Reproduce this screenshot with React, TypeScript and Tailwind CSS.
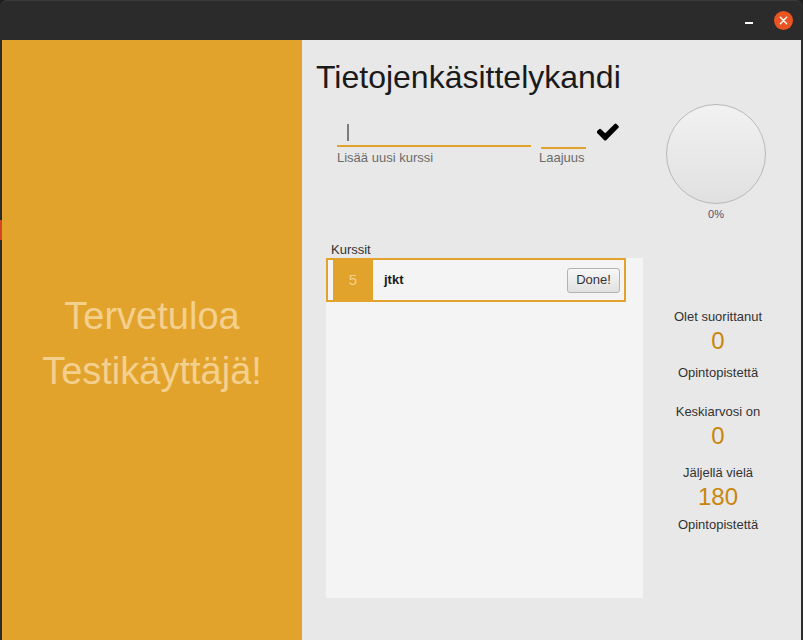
import React from 'react';

const font = { fontFamily: '"Liberation Sans", Arial, sans-serif' };

const TitleBar: React.FC = () => (
  <div className="h-[40px] bg-[#2b2b2b] rounded-t-[7px] border-t border-[#3a3a3a] flex items-center justify-end pr-[10px]">
    {/* Minimize */}
    <div className="w-[8px] h-[2px] bg-white mr-[21px] mt-[4px]" />
    {/* Close */}
    <div className="w-[19px] h-[19px] rounded-full bg-[#e95420] flex items-center justify-center">
      <svg viewBox="0 0 10 10" className="w-[9px] h-[9px]">
        <path d="M1.5 1.5 L8.5 8.5 M8.5 1.5 L1.5 8.5" stroke="white" strokeWidth="1.6" strokeLinecap="round" />
      </svg>
    </div>
  </div>
);

const Stat: React.FC<{ label: string; className?: string }> = ({ label, className }) => (
  <div className={`text-[13px] leading-[16px] text-[#333] ${className ?? ''}`}>{label}</div>
);

const Num: React.FC<{ value: string; className?: string }> = ({ value, className }) => (
  <div className={`text-[24px] leading-[28px] text-[#c9860b] ${className ?? ''}`}>{value}</div>
);

export default function App() {
  return (
    <div className="w-[803px] h-[640px] bg-[#1f1f1f] flex flex-col overflow-hidden" style={font}>
      <TitleBar />
      <div className="flex flex-1 bg-[#2b2b2b]">
        {/* left window edge */}
        <div className="w-[2px] flex flex-col">
          <div className="h-[180px]" />
          <div className="h-[20px] bg-[#d2451e]" />
        </div>

        {/* Welcome panel */}
        <div className="w-[300px] bg-[#e2a32d] flex items-center justify-center">
          <div className="text-center text-[38px] leading-[55px] text-[#f3d08e] mt-[7px]">
            Tervetuloa
            <br />
            Testikäyttäjä!
          </div>
        </div>

        {/* Main area */}
        <div className="w-[499px] bg-[#e8e8e8] flex flex-col">
          <h1 className="ml-[14px] mt-[21px] text-[32px] leading-[32px] text-[#1a1a1a]">Tietojenkäsittelykandi</h1>

          {/* Input row */}
          <div className="flex items-start mt-[11px]">
            <div className="ml-[35px] mt-[15px] w-[194px]">
              <div className="h-[28px] border-b-2 border-[#e2a32d] flex items-start pl-[10px] pt-[5px]">
                <div className="w-[2px] h-[17px] bg-[#7d7d7d]" />
              </div>
              <div className="mt-[3px] text-[13px] leading-[16px] text-[#6b6b6b]">Lisää uusi kurssi</div>
            </div>
            <div className="ml-[10px] mt-[15px] w-[45px]">
              <div className="h-[30px] border-b-2 border-[#e2a32d]" />
              <div className="mt-[1px] text-[13px] leading-[16px] text-[#6b6b6b] -ml-[2px]">Laajuus</div>
            </div>
            <div className="ml-[11px] mt-[19px]">
              <svg viewBox="140 320 1540 1210" className="w-[22px] h-[18px]">
                <path
                  d="M1671 566q0 40-28 68l-724 724-136 136q-28 28-68 28t-68-28l-136-136-362-362q-28-28-28-68t28-68l136-136q28-28 68-28t68 28l294 295 656-657q28-28 68-28t68 28l136 136q28 28 28 68z"
                  fill="#000"
                />
              </svg>
            </div>
            <div className="ml-[47px] flex flex-col items-center">
              <div className="w-[100px] h-[100px] rounded-full border border-[#b9b9b9] bg-gradient-to-b from-[#f2f2f2] to-[#e0e0e0]" />
              <div className="mt-[3px] text-[11px] leading-[14px] text-[#4d5273]">0%</div>
            </div>
          </div>

          {/* Bottom row */}
          <div className="flex items-start mt-[21px]">
            <div className="ml-[24px] w-[317px]">
              <div className="ml-[5px] text-[13px] leading-[16px] text-[#333]">Kurssit</div>
              <div className="h-[340px] bg-[#f4f4f4]">
                <div className="w-[300px] h-[44px] border-2 border-[#e2a32d] flex items-stretch pl-[5px]">
                  <div className="w-[40px] bg-[#e2a32d] flex items-center justify-center text-[15px] text-[#f3d08e]">5</div>
                  <div className="flex-1 flex items-center pl-[11px] text-[13px] font-bold text-[#1a1a1a]">jtkt</div>
                  <div className="flex items-center pr-[4px]">
                    <button className="w-[53px] h-[25px] rounded-[3px] border border-[#b3b3b3] bg-gradient-to-b from-[#f7f7f7] to-[#e1e1e1] text-[13px] text-[#333]">
                      Done!
                    </button>
                  </div>
                </div>
              </div>
            </div>

            {/* Stats */}
            <div className="w-[150px] flex flex-col items-center text-center mt-[67px]">
              <Stat label="Olet suorittanut" />
              <Num value="0" className="mt-[2px]" />
              <Stat label="Opintopistettä" className="mt-[10px]" />
              <Stat label="Keskiarvosi on" className="mt-[23px]" />
              <Num value="0" className="mt-[2px]" />
              <Stat label="Jäljellä vielä" className="mt-[15px]" />
              <Num value="180" className="mt-[2px]" />
              <Stat label="Opintopistettä" className="mt-[6px]" />
            </div>
          </div>
        </div>
        <div className="w-[2px]" />
      </div>
    </div>
  );
}
